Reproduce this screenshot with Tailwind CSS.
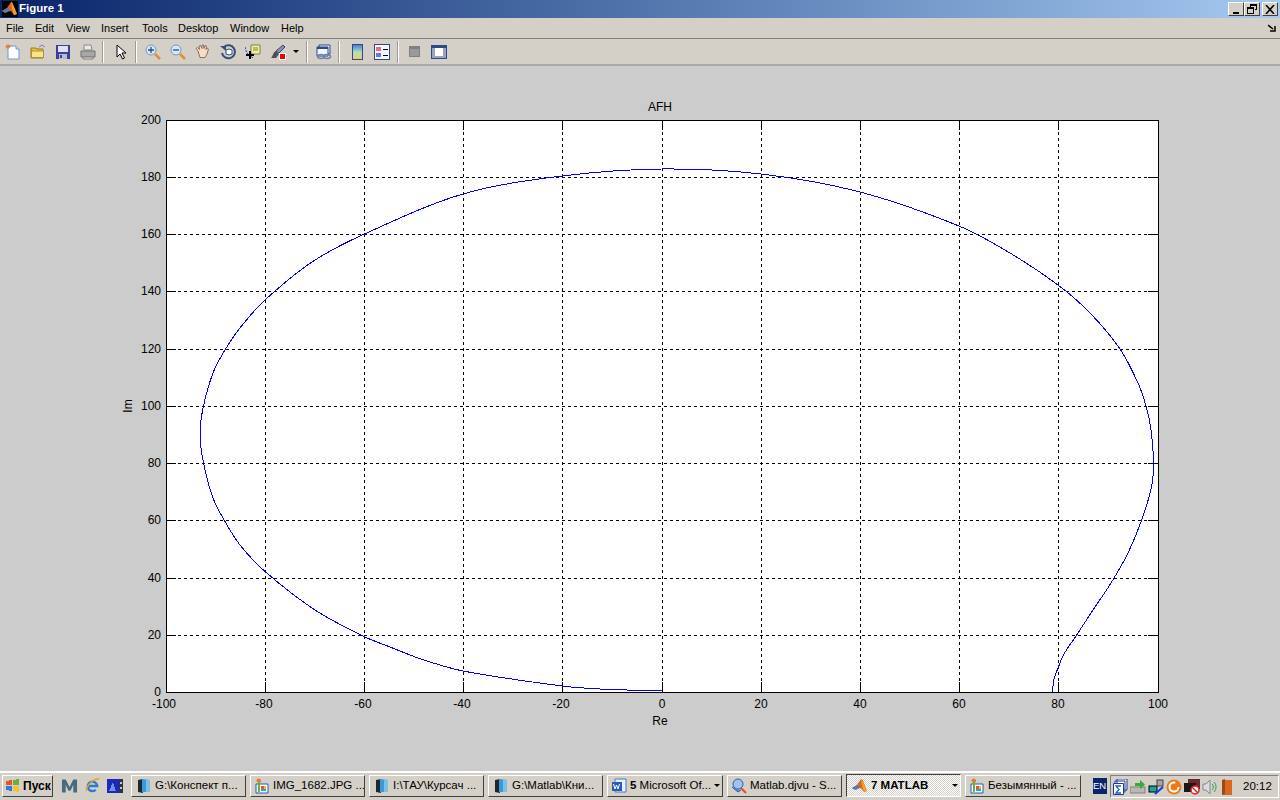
<!DOCTYPE html>
<html lang="en">
<head>
<meta charset="UTF-8">
<title>Figure 1</title>
<script src="https://cdn.jsdelivr.net/npm/@tailwindcss/browser@4"></script>
</head>
<body class="m-0 overflow-hidden">
<svg class="absolute w-0 h-0">
  <symbol id="folder" viewBox="0 0 16 16">
    <path d="M2 2l5 -1v14l-5 -1z" fill="#1a2a30"/><path d="M6 1l8 1v12h-8z" fill="#3f97d6"/><path d="M10 2h4v12h-4z" fill="#7cc0ea"/>
  </symbol>
  <symbol id="paint" viewBox="0 0 16 16">
    <path d="M2 6h12v9h-12z" fill="#fff" stroke="#1c5cb8"/><path d="M4 1.500l3 0v2l-1 1v9l-2 1z" fill="#5fb04a"/><circle cx="4.500" cy="2.500" r="2" fill="#ee7a22"/><rect x="7" y="8" width="3" height="3" fill="#e8552a"/><rect x="10" y="8" width="2" height="3" fill="#f4b42e"/><rect x="7" y="11" width="5" height="2" fill="#2aa0d8"/>
  </symbol>
  <symbol id="matlab" viewBox="0 0 16 16">
    <path d="M0 10l5 -3 4 -6c1 -1 2 2 6 12l-3 1 -3 -4 -5 1 -1 1z" fill="#d8641e"/><path d="M0 10l5 -3 3 2 -4 3z" fill="#4b7fb8"/><path d="M9 1c1 0 2 3 6 12l-3 1 -2 -6z" fill="#f0a030"/>
  </symbol>
</svg>
<div class="flex flex-col w-[1280px] h-[800px] overflow-hidden bg-[#cccccc] font-['Liberation_Sans',Arial,sans-serif] text-black">

  <!-- title bar -->
  <div class="flex items-center h-[18px] pl-[2px] pr-[2px] bg-gradient-to-r from-[#0a246a] to-[#a6caf0] shrink-0">
    <svg class="w-4 h-4 bg-black" viewBox="0 0 16 16"><use href="#matlab"/></svg>
    <span class="ml-[1px] text-white font-bold text-[11.500px] leading-none">Figure 1</span>
    <div class="ml-auto flex">
      <div class="w-4 h-[14px] bg-[#d4d0c8] border border-t-white border-l-white border-r-[#404040] border-b-[#404040] flex items-end justify-center pb-[1px]"><div class="w-[6px] h-[2px] bg-black"></div></div>
      <div class="w-4 h-[14px] bg-[#d4d0c8] border border-t-white border-l-white border-r-[#404040] border-b-[#404040] flex items-center justify-center">
        <svg width="10" height="10" viewBox="0 0 10 10" shape-rendering="crispEdges" fill="none" stroke="#000"><path d="M3.500 2.500v-2h6v5h-2M3.500 1.500h6M.500 3.500h6v6h-6zM.500 4.500h6"/></svg>
      </div>
      <div class="ml-[2px] w-4 h-[14px] bg-[#d4d0c8] border border-t-white border-l-white border-r-[#404040] border-b-[#404040] flex items-center justify-center">
        <svg width="10" height="9" viewBox="0 0 10 9" fill="none" stroke="#000" stroke-width="1.500"><path d="M1 0l8 9M9 0l-8 9"/></svg>
      </div>
    </div>
  </div>

  <!-- menu bar -->
  <div class="flex items-center h-[20px] bg-[#d4d0c8] text-[11px] shrink-0 pl-[6px]">
    <span class="w-[29px]">File</span><span class="w-[31px]">Edit</span><span class="w-[35px]">View</span><span class="w-[41px]">Insert</span><span class="w-[36px]">Tools</span><span class="w-[52px]">Desktop</span><span class="w-[51px]">Window</span><span>Help</span>
    <svg class="ml-auto mr-[4px]" width="8" height="8" viewBox="0 0 8 8" fill="none" stroke="#000" stroke-width="1.500"><path d="M0 1l5 4M7 2v5h-5"/></svg>
  </div>

  <!-- toolbar -->
  <div class="flex items-center h-[28px] bg-[#d4d0c8] border-t border-t-[#808080] border-b-2 border-b-[#a8a8a8] shrink-0">
    <div class="w-[25px] flex justify-center"><svg width="16" height="16" viewBox="0 0 16 16"><path d="M3 2h8l3 3v10h-11z" fill="#fff" stroke="#6a9ad0"/><path d="M11 2v3h3" fill="#dfeaf6" stroke="#6a9ad0"/><path d="M3 0v5M0.500 2.500h5M1 1l4 3M5 1l-4 3" stroke="#e87840"/></svg></div>
    <div class="w-[25px] flex justify-center"><svg width="16" height="16" viewBox="0 0 16 16"><path d="M1 4h5l1 1h6v9h-12z" fill="#e8c040" stroke="#9a7a18"/><path d="M1.500 7h12v6.500h-12z" fill="#f8e48c" stroke="#b09028"/><path d="M9 3l3 -2 3 2" fill="none" stroke="#6a86a8"/></svg></div>
    <div class="w-[25px] flex justify-center"><svg width="16" height="16" viewBox="0 0 16 16" shape-rendering="crispEdges"><rect x="1" y="1" width="14" height="14" fill="#3d3f9c"/><rect x="3" y="2" width="10" height="6" fill="#dfe2f2"/><rect x="4" y="10" width="8" height="5" fill="#b8bccf"/><rect x="5" y="11" width="2" height="3" fill="#3d3f9c"/></svg></div>
    <div class="w-[25px] flex justify-center"><svg width="16" height="16" viewBox="0 0 16 16"><path d="M4 1h7l1 5h-8z" fill="#e8e8e8" stroke="#8a8a8a"/><path d="M1 7h14v6h-14z" fill="#a8a8a8" stroke="#707070"/><path d="M3 13h10v2h-10z" fill="#d8d8d8" stroke="#808080"/></svg></div>
    <div class="w-[6px] flex justify-center mr-[2px]"><div class="w-[2px] h-[22px] bg-white border-l border-l-[#a09c94]"></div></div>
    <div class="w-[25px] flex justify-center"><svg width="16" height="16" viewBox="0 0 16 16"><path d="M4 1v12l3 -3 2.500 5 2 -1 -2.500 -5h4z" fill="#fff" stroke="#000"/></svg></div>
    <div class="w-[6px] flex justify-center mr-[1px]"><div class="w-[2px] h-[22px] bg-white border-l border-l-[#a09c94]"></div></div>
    <div class="w-[25px] flex justify-center"><svg width="16" height="16" viewBox="0 0 16 16"><path d="M10 10l5 5" stroke="#e09030" stroke-width="2.500"/><circle cx="6" cy="6" r="5" fill="#d4e8f8" stroke="#7898b8"/><path d="M3 6h6M6 3v6" stroke="#2a4a90" stroke-width="1.300"/></svg></div>
    <div class="w-[25px] flex justify-center"><svg width="16" height="16" viewBox="0 0 16 16"><path d="M10 10l5 5" stroke="#e09030" stroke-width="2.500"/><circle cx="6" cy="6" r="5" fill="#d4e8f8" stroke="#7898b8"/><path d="M3 6h6" stroke="#2a4a90" stroke-width="1.300"/></svg></div>
    <div class="w-[25px] flex justify-center"><svg width="16" height="16" viewBox="0 0 16 16"><path d="M3 7l-2 -2.500 1.500 -1 2 2 -.5 -3.500 1.500 -.5 1.500 3 0 -3.500 1.500 0 .5 3.500 1 -3 1.500 .5 -.5 3.500 1 -1.500 1.500 1 -1.500 5 -2 3.500h-5z" fill="#f8dcc4" stroke="#8a7060"/></svg></div>
    <div class="w-[25px] flex justify-center"><svg width="16" height="16" viewBox="0 0 16 16"><path d="M4 3a6.500 6.500 0 1 1 -2 6" fill="none" stroke="#34507a" stroke-width="2"/><path d="M0 2h6v5z" fill="#34507a"/><path d="M6 6l3 -1 3 1v4l-3 1 -3 -1z" fill="#fff" stroke="#34507a"/></svg></div>
    <div class="w-[25px] flex justify-center"><svg width="16" height="16" viewBox="0 0 16 16"><path d="M0 3c1 5 3 9 9 11" fill="none" stroke="#2838d0" stroke-dasharray="2 1"/><path d="M6 1h9v9h-9z" fill="#f4eea0" stroke="#808040"/><path d="M8 4h5M8 6h5" stroke="#808040"/><path d="M5 7v8M1 11h8" stroke="#000" stroke-width="2"/></svg></div>
    <div class="w-[25px] flex justify-center"><svg width="16" height="16" viewBox="0 0 16 16"><path d="M13 1l2 2 -6 6 -3 -2z" fill="#8090c0" stroke="#404868"/><path d="M6 7l3 3 -3 4h-5c2 -2 2 -6 5 -7z" fill="#505050"/><rect x="9" y="9" width="7" height="7" fill="#fff"/><rect x="10" y="10" width="5" height="5" fill="#f00000"/></svg></div>
    <div class="w-[12px] flex justify-center"><div class="w-0 h-0 border-x-[3px] border-x-transparent border-t-[3px] border-t-black"></div></div>
    <div class="w-[6px] flex justify-center ml-[2px]"><div class="w-[2px] h-[22px] bg-white border-l border-l-[#a09c94]"></div></div>
    <div class="w-[25px] flex justify-center ml-[1px]"><svg width="16" height="16" viewBox="0 0 16 16"><path d="M3 1h11v9h-11z" fill="#e8eef8" stroke="#2c4a88"/><path d="M1 3h11v9h-11z" fill="#f4f6fc" stroke="#2c4a88"/><path d="M1 3h11v2h-11z" fill="#2c4a88"/><g fill="none" stroke="#6a84a8" stroke-width="1.500"><ellipse cx="5" cy="12.500" rx="3.500" ry="2"/><ellipse cx="11" cy="12.500" rx="3.500" ry="2"/></g></svg></div>
    <div class="w-[6px] flex justify-center"><div class="w-[2px] h-[22px] bg-white border-l border-l-[#a09c94]"></div></div>
    <div class="w-[24px] flex justify-center ml-[3px]"><div class="w-[11px] h-[16px] bg-gradient-to-b from-[#5878c8] via-[#a8e0c0] to-[#f4c860] border border-[#2c4a88]"></div></div>
    <div class="w-[25px] flex justify-center"><svg width="16" height="16" viewBox="0 0 16 16" shape-rendering="crispEdges"><rect x=".5" y=".5" width="15" height="15" fill="#f4f6fc" stroke="#2c4a88"/><rect x="2" y="3" width="5" height="4" fill="#e87070"/><rect x="2" y="9" width="5" height="4" fill="#7070e8"/><rect x="9" y="5" width="5" height="1" fill="#000"/><rect x="9" y="11" width="5" height="1" fill="#000"/></svg></div>
    <div class="w-[6px] flex justify-center ml-[1px]"><div class="w-[2px] h-[22px] bg-white border-l border-l-[#a09c94]"></div></div>
    <div class="w-[23px] flex justify-center ml-[2px]"><div class="w-[11px] h-[11px] bg-[#9a9a9a] border border-[#808080] border-t-[3px]"></div></div>
    <div class="w-[25px] flex justify-center"><svg width="16" height="16" viewBox="0 0 16 16" shape-rendering="crispEdges"><rect x=".5" y="1.500" width="15" height="13" fill="#9aa4c0" stroke="#2c4a88"/><rect x="1" y="2" width="14" height="2" fill="#2c4a88"/><rect x="4" y="4" width="8" height="8" fill="#fff"/></svg></div>
  </div>

  <!-- figure -->
  <div class="grow relative">
    <svg class="block" width="1280" height="705" viewBox="0 66 1280 705" font-size="12" font-family="Liberation Sans, Arial, sans-serif">
      <rect x="166.500" y="120.500" width="992" height="572" fill="#fff"/>
      <path shape-rendering="crispEdges" fill="none" stroke="#000" stroke-dasharray="3 3" d="M265.500 120V692M364.500 120V692M463.500 120V692M562.500 120V692M662.500 120V692M761.500 120V692M860.500 120V692M959.500 120V692M1058.500 120V692M166 177.500H1158M166 234.500H1158M166 291.500H1158M166 349.500H1158M166 406.500H1158M166 463.500H1158M166 520.500H1158M166 578.500H1158M166 635.500H1158"/>
      <path id="curve" shape-rendering="crispEdges" fill="none" stroke="#0000ff" d=""/>
      <path shape-rendering="crispEdges" fill="none" stroke="#000" d="M166.500 120.500H1158.500V692.500H166.500ZM166 177.500h10M166 234.500h10M166 291.500h10M166 349.500h10M166 406.500h10M166 463.500h10M166 520.500h10M166 578.500h10M166 635.500h10M1158 177.500h-10M1158 234.500h-10M1158 291.500h-10M1158 349.500h-10M1158 406.500h-10M1158 463.500h-10M1158 520.500h-10M1158 578.500h-10M1158 635.500h-10M265.500 692v-10M364.500 692v-10M463.500 692v-10M562.500 692v-10M662.500 692v-10M761.500 692v-10M860.500 692v-10M959.500 692v-10M1058.500 692v-10M265.500 120v10M364.500 120v10M463.500 120v10M562.500 120v10M662.500 120v10M761.500 120v10M860.500 120v10M959.500 120v10M1058.500 120v10"/>
      <g text-anchor="end">
        <text x="161" y="124">200</text><text x="161" y="181">180</text><text x="161" y="238">160</text><text x="161" y="295">140</text><text x="161" y="353">120</text><text x="161" y="410">100</text><text x="161" y="467">80</text><text x="161" y="524">60</text><text x="161" y="582">40</text><text x="161" y="639">20</text><text x="161" y="696">0</text>
      </g>
      <g text-anchor="middle">
        <text x="164" y="708">-100</text><text x="264" y="708">-80</text><text x="363" y="708">-60</text><text x="462" y="708">-40</text><text x="561" y="708">-20</text><text x="662" y="708">0</text><text x="761" y="708">20</text><text x="860" y="708">40</text><text x="959" y="708">60</text><text x="1058" y="708">80</text><text x="1158" y="708">100</text>
        <text x="660" y="111">AFH</text><text x="660" y="725">Re</text>
        <text transform="translate(132 406) rotate(-90)">Im</text>
      </g>
    </svg>
  </div>

  <!-- taskbar -->
  <div class="flex items-center h-[29px] bg-[#d4d0c8] border-t-2 border-t-white text-[11.500px] shrink-0 pl-[2px] pb-[2px]">
    <div class="flex items-center gap-[2px] w-[51px] h-[22px] pl-[2px] font-bold text-[12px] bg-[#d4d0c8] border border-t-white border-l-white border-r-[#404040] border-b-[#404040]">
      <svg width="16" height="14" viewBox="0 0 16 14" shape-rendering="crispEdges"><path d="M1 2l6 -1v5h-6z" fill="#e8542a"/><path d="M8 1l6 -1v6h-6z" fill="#6cb038"/><path d="M1 7h6v5l-6 -1z" fill="#3878d8"/><path d="M8 7h6v6l-6 -1z" fill="#f4c428"/></svg>
      <span>Пуск</span>
    </div>
    <div class="flex items-center w-[78px] pl-[8px] gap-[6px]">
      <svg width="17" height="16" viewBox="0 0 18 16"><path d="M1 15v-14h4l4 8 4 -8h4v14h-4v-8l-3 6h-2l-3 -6v8z" fill="#4a6a80"/></svg>
      <svg width="17" height="17" viewBox="0 0 18 18"><path d="M4.500 9.500h9.500a5 5 0 1 0 -1.500 4" fill="none" stroke="#2a7ad8" stroke-width="2.500"/><path d="M16 2c-4 -1 -12 4 -14 13" fill="none" stroke="#f0a020" stroke-width="1.500"/></svg>
      <svg width="16" height="14" viewBox="0 0 16 14" shape-rendering="crispEdges"><rect width="12" height="14" fill="#1c28b8"/><path d="M2 12l4 -9 3 9z" fill="#7090f0"/><rect x="12" width="4" height="14" fill="#303048"/><rect x="13" y="3" width="2" height="2" fill="#c8c8d8"/><rect x="13" y="8" width="2" height="2" fill="#c8c8d8"/></svg>
    </div>
    <div class="flex gap-[4px] items-center">
      <div class="flex items-center w-[115px] h-[22px] pl-[4px] overflow-hidden whitespace-nowrap border border-t-white border-l-white border-r-[#404040] border-b-[#404040]"><svg class="w-4 h-4 shrink-0"><use href="#folder"/></svg><span class="ml-[3px]">G:\Конспект п...</span></div>
      <div class="flex items-center w-[115px] h-[22px] pl-[3px] overflow-hidden whitespace-nowrap border border-t-white border-l-white border-r-[#404040] border-b-[#404040]"><svg class="w-4 h-4 shrink-0"><use href="#paint"/></svg><span class="ml-[3px]">IMG_1682.JPG ...</span></div>
      <div class="flex items-center w-[115px] h-[22px] pl-[4px] overflow-hidden whitespace-nowrap border border-t-white border-l-white border-r-[#404040] border-b-[#404040]"><svg class="w-4 h-4 shrink-0"><use href="#folder"/></svg><span class="ml-[3px]">I:\ТАУ\Курсач ...</span></div>
      <div class="flex items-center w-[115px] h-[22px] pl-[4px] overflow-hidden whitespace-nowrap border border-t-white border-l-white border-r-[#404040] border-b-[#404040]"><svg class="w-4 h-4 shrink-0"><use href="#folder"/></svg><span class="ml-[3px]">G:\Matlab\Кни...</span></div>
      <div class="flex items-center w-[116px] h-[22px] pl-[3px] pr-[2px] overflow-hidden whitespace-nowrap border border-t-white border-l-white border-r-[#404040] border-b-[#404040]"><svg width="16" height="16" viewBox="0 0 16 16" class="shrink-0"><path d="M4 1h11v13h-11z" fill="#e8f0fc" stroke="#4a78c8"/><path d="M1 4h10v9h-10z" fill="#2c5cb8"/><path d="M2.500 6l1.500 5 1.500 -4 1.500 4 1.500 -5" fill="none" stroke="#fff"/></svg><span class="ml-[3px]"><b>5</b> Microsoft Of...</span><div class="ml-auto w-0 h-0 border-x-[3px] border-x-transparent border-t-[3px] border-t-black"></div></div>
      <div class="flex items-center w-[115px] h-[22px] pl-[3px] overflow-hidden whitespace-nowrap border border-t-white border-l-white border-r-[#404040] border-b-[#404040]"><svg width="16" height="16" viewBox="0 0 16 16" class="shrink-0"><path d="M10 10l5 5" stroke="#e05020" stroke-width="2"/><circle cx="7" cy="6" r="5" fill="#9cc4ec" stroke="#3060a8"/><path d="M1 9l6 5 3 -2" fill="#5888c8" stroke="#3060a8"/></svg><span class="ml-[3px]">Matlab.djvu - S...</span></div>
      <div class="flex items-center w-[115px] h-[23px] pl-[5px] pr-[2px] overflow-hidden whitespace-nowrap font-bold border border-t-[#404040] border-l-[#404040] border-r-white border-b-white bg-[repeating-conic-gradient(#ffffff_0_25%,#d4d0c8_0_50%)] bg-[length:2px_2px]"><svg class="w-4 h-4 shrink-0"><use href="#matlab"/></svg><span class="ml-[3px]">7 MATLAB</span><div class="ml-auto w-0 h-0 border-x-[3px] border-x-transparent border-t-[3px] border-t-black"></div></div>
      <div class="flex items-center w-[116px] h-[22px] pl-[3px] overflow-hidden whitespace-nowrap border border-t-white border-l-white border-r-[#404040] border-b-[#404040]"><svg class="w-4 h-4 shrink-0"><use href="#paint"/></svg><span class="ml-[3px]">Безымянный - ...</span></div>
    </div>
    <div class="ml-[12px] w-[14px] h-[16px] bg-[#0a246a] text-white text-[9.500px] leading-[16px]">EN</div>
    <div class="ml-[3px] flex items-center w-[169px] h-[23px] mt-[2px] pl-[2px] border border-t-[#808080] border-l-[#808080] border-r-white border-b-white">
      <div class="flex items-center gap-[2px]">
        <svg width="15" height="16" viewBox="0 0 15 16"><path d="M4 0h10v11h-10zM2 2h10v11h-10z" fill="#fff" stroke="#1c3c98"/><path d="M0.500 4.500h10v11h-10z" fill="#fff" stroke="#1c3c98"/><path d="M8 7h-5l3 3.500 -3 3.500h5" fill="none" stroke="#1c60c8" stroke-width="1.300"/></svg>
        <svg width="16" height="16" viewBox="0 0 16 16"><rect x="0" y="8" width="15" height="6" fill="#b8b8b8" stroke="#808080"/><path d="M5 4h5v-3l5 4.500 -5 4.500v-3h-5z" fill="#3aa83a"/></svg>
        <svg width="16" height="16" viewBox="0 0 16 16"><rect x="1" y="7" width="8" height="6" fill="#20a0a0" stroke="#000"/><rect x="9" y="1" width="6" height="6" fill="#a8a8a8" stroke="#404040"/><path d="M7 15l8 -7" stroke="#1838d8" stroke-width="2"/></svg>
        <svg width="16" height="16" viewBox="0 0 16 16"><circle cx="8" cy="8" r="7.500" fill="#f07818"/><circle cx="8" cy="8" r="4.500" fill="none" stroke="#fff" stroke-width="2" stroke-dasharray="22 6"/></svg>
        <svg width="16" height="16" viewBox="0 0 16 16"><rect x="4" y="0" width="12" height="10" fill="#6a2830"/><rect x="0" y="4" width="12" height="9" fill="#181818"/><circle cx="11" cy="11" r="4" fill="#fff" stroke="#e02020" stroke-width="1.500"/><path d="M8 8l6 6" stroke="#e02020" stroke-width="1.500"/></svg>
        <svg width="16" height="16" viewBox="0 0 16 16"><path d="M1 5h3l4 -4v14l-4 -4h-3z" fill="#d8dce0" stroke="#808890"/><path d="M10 5a4 4 0 0 1 0 6M12 3a7 7 0 0 1 0 10" fill="none" stroke="#30a050"/></svg>
        <svg width="14" height="16" viewBox="0 0 14 16"><path d="M2 1h10v15h-10z" fill="#d86820"/><path d="M2 1l3 -1v15l-3 1z" fill="#a04810"/></svg>
      </div>
      <span class="ml-[9px]">20:12</span>
    </div>
  </div>
</div>
<script>
  // nyquist curve traced from the plot, tangents scaled per segment so uneven spacing stays smooth
  const pts = [[662,691],[600,689],[562,686],[463,671],[421,659],[390,647],[364,636.500],[315,610],[265,571.500],[240,545],[225,521.500],[213,498],[203.500,463],[200,433],[203.500,406],[213,373],[225.500,349],[241.500,326],[265,300],[312,262],[364.500,234],[463,194],[562,176],[662,169],[761,174],[860,192],[959,226],[1010,253],[1058,285],[1090,313],[1120,349],[1138,383],[1146,406],[1151,430],[1153.500,463],[1151.500,487],[1141.500,520.500],[1128,553],[1111,583],[1093,610],[1076,636],[1064,654],[1058,668],[1054,679],[1052.500,692]];
  const unitTangent = (a, b) => {
    const dx = b[0] - a[0], dy = b[1] - a[1], len = Math.hypot(dx, dy);
    return [dx / len, dy / len];
  };
  let d = `M${pts[0]}`;
  for (let i = 0; i < pts.length - 1; i++) {
    const p0 = pts[i - 1] || pts[i], p1 = pts[i], p2 = pts[i + 1], p3 = pts[i + 2] || p2;
    const len = Math.hypot(p2[0] - p1[0], p2[1] - p1[1]) / 3;
    const t1 = unitTangent(p0, p2), t2 = unitTangent(p1, p3);
    d += `C${p1[0] + t1[0] * len} ${p1[1] + t1[1] * len} ${p2[0] - t2[0] * len} ${p2[1] - t2[1] * len} ${p2[0]} ${p2[1]}`;
  }
  document.getElementById('curve').setAttribute('d', d);
</script>
</body>
</html>
